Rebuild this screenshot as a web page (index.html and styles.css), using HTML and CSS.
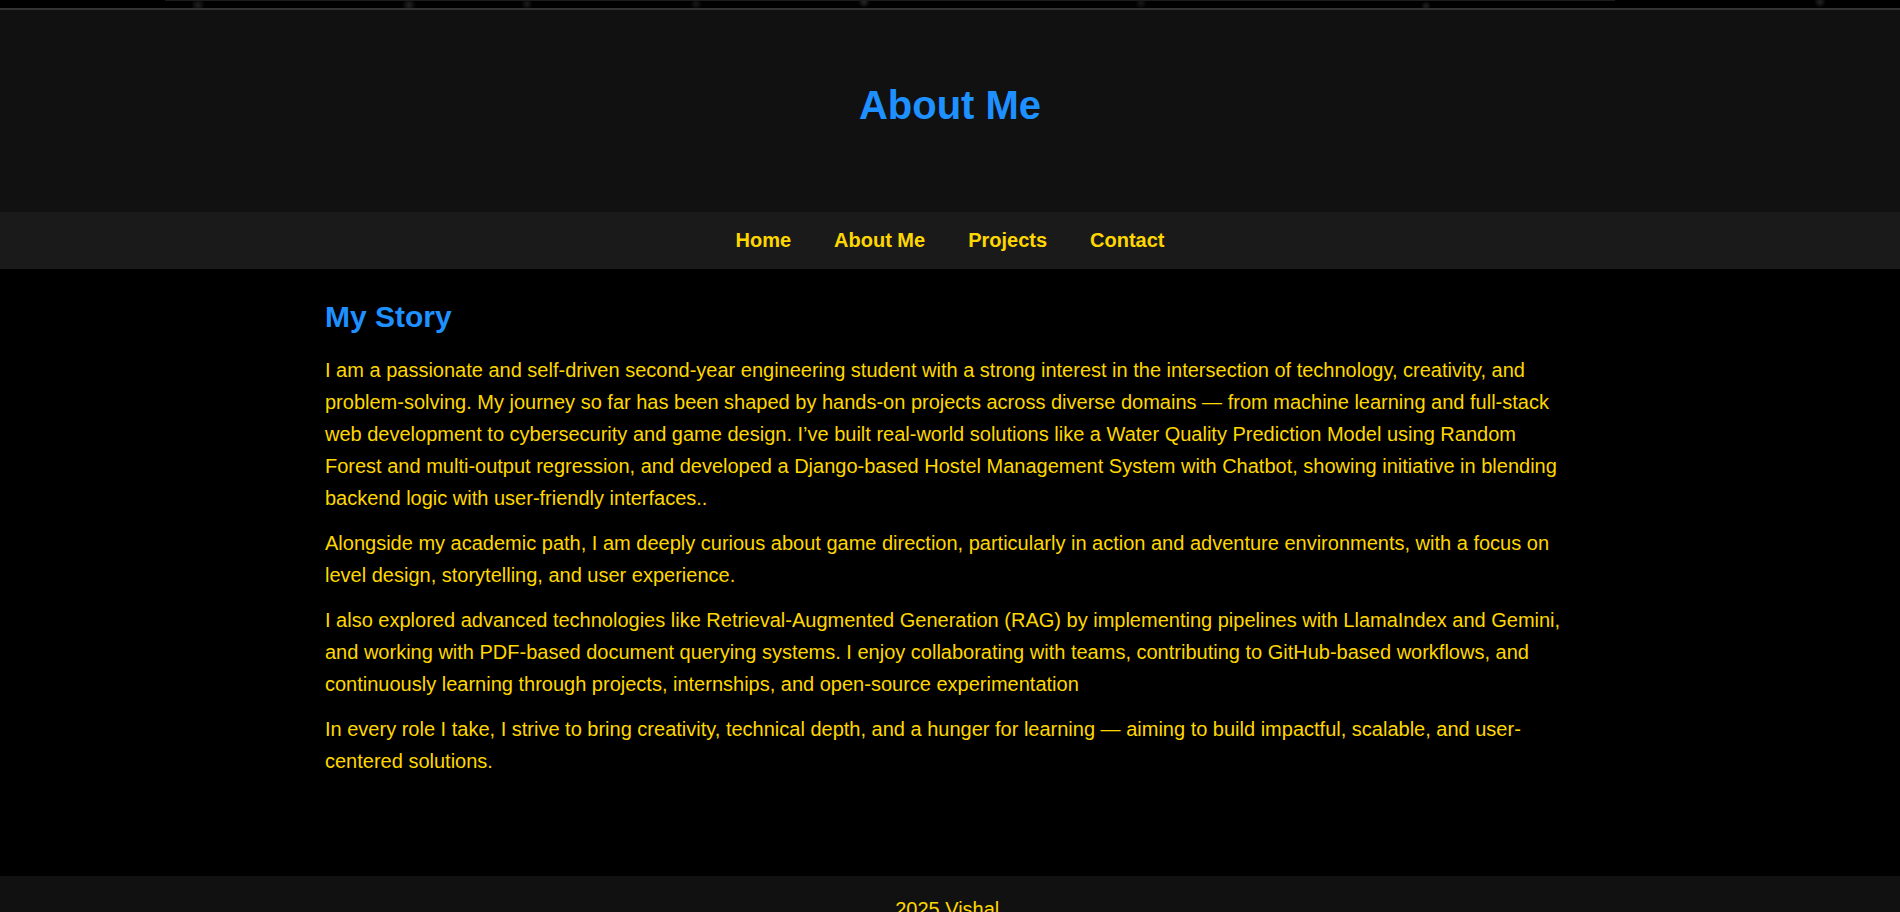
FILE: index.html
```html
<!DOCTYPE html>
<html lang="en">
<head>
<meta charset="utf-8">
<title>About Me</title>
<link rel="stylesheet" href="styles.css">
</head>
<body>
<div class="top-strip"><div class="top-card"></div></div>
<header class="header"><h1 class="title">About Me</h1></header>
<nav class="nav">
<a class="nav-link" href="#home">Home</a>
<a class="nav-link" href="#about">About Me</a>
<a class="nav-link" href="#projects">Projects</a>
<a class="nav-link" href="#contact">Contact</a>
</nav>
<main class="content" id="about">
<h2 class="heading">My Story</h2>
<p class="text">I am a passionate and self-driven second-year engineering student with a strong interest in the intersection of technology, creativity, and problem-solving. My journey so far has been shaped by hands-on projects across diverse domains — from machine learning and full-stack web development to cybersecurity and game design. I’ve built real-world solutions like a Water Quality Prediction Model using Random Forest and multi-output regression, and developed a Django-based Hostel Management System with Chatbot, showing initiative in blending backend logic with user-friendly interfaces..</p>
<p class="text">Alongside my academic path, I am deeply curious about game direction, particularly in action and adventure environments, with a focus on level design, storytelling, and user experience.</p>
<p class="text">I also explored advanced technologies like Retrieval-Augmented Generation (RAG) by implementing pipelines with LlamaIndex and Gemini, and working with PDF-based document querying systems. I enjoy collaborating with teams, contributing to GitHub-based workflows, and continuously learning through projects, internships, and open-source experimentation</p>
<p class="text">In every role I take, I strive to bring creativity, technical depth, and a hunger for learning — aiming to build impactful, scalable, and user-centered solutions.</p>
</main>
<footer class="footer"><p class="footer-text">2025 Vishal.</p></footer>
</body>
</html>
```
FILE: styles.css
```css
* {
  box-sizing: border-box;
}

html {
  overflow: hidden;
}

body {
  height: 100vh;
  margin: 0;
  overflow: hidden;
  background: #000;
  color: #ffd700;
  font: 20px/32px "Liberation Sans", Arial, sans-serif;
}

/* Starry edge above the header */
.top-strip {
  height: 10px;
  border-bottom: 2px solid #333;
  background:
    radial-gradient(circle at 198px 5px, #202020, transparent 7px),
    radial-gradient(circle at 409px 5px, #242424, transparent 7px),
    radial-gradient(circle at 527px 4px, #1c1c1c, transparent 6px),
    radial-gradient(circle at 696px 4px, #181818, transparent 6px),
    radial-gradient(circle at 864px 2px, #282828, transparent 6px),
    radial-gradient(circle at 1141px 3px, #181818, transparent 6px),
    radial-gradient(circle at 1426px 6px, #222, transparent 5px),
    radial-gradient(circle at 1820px 2px, #242424, transparent 6px),
    #000;
}

.top-card {
  width: 1450px;
  max-width: 100%;
  height: 1px;
  margin: 0 auto;
  transform: translateX(-60px);
  background: #1c1c20;
}

.header {
  padding: 66px 20px 78px;
  background: #111;
  text-align: center;
}

.title {
  margin: 0;
  color: #1e90ff;
  font-size: 40px;
  line-height: 58px;
}

.nav {
  display: flex;
  justify-content: center;
  gap: 43px;
  padding: 12px 12px 13px;
  background: #1a1a1a;
}

.nav-link {
  color: #ffd700;
  font-weight: bold;
  text-decoration: none;
}

.content {
  max-width: 1298px;
  margin: 0 auto;
  padding: 24px 24px 86px;
}

.heading {
  margin: 0 0 13px;
  color: #1e90ff;
  font-size: 30px;
  line-height: 48px;
}

.text {
  margin: 0 0 13px;
}

.footer {
  padding: 17px 20px;
  background: #111;
  text-align: center;
}

.footer-text {
  margin: 0;
}
```
